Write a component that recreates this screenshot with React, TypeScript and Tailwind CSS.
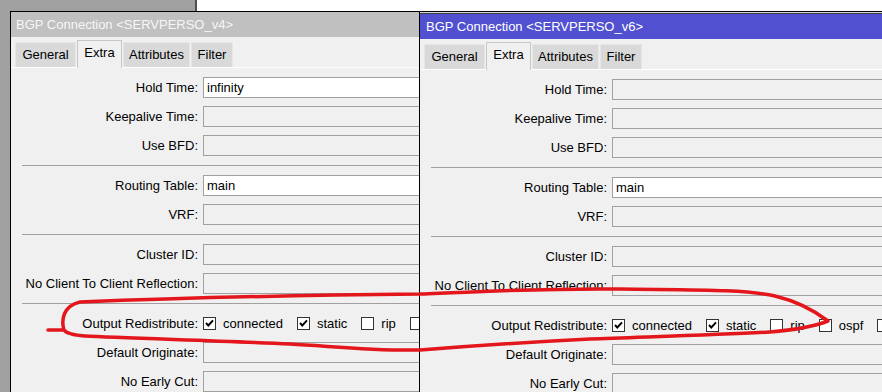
type Row =
  | { kind: "field"; label: string; value?: string }
  | { kind: "sep" }
  | { kind: "checks"; label: string };

type Box = { name?: string; checked: boolean };

const rows = (holdTime?: string): Row[] => [
  { kind: "field", label: "Hold Time", value: holdTime },
  { kind: "field", label: "Keepalive Time" },
  { kind: "field", label: "Use BFD" },
  { kind: "sep" },
  { kind: "field", label: "Routing Table", value: "main" },
  { kind: "field", label: "VRF" },
  { kind: "sep" },
  { kind: "field", label: "Cluster ID" },
  { kind: "field", label: "No Client To Client Reflection" },
  { kind: "sep" },
  { kind: "checks", label: "Output Redistribute" },
  { kind: "field", label: "Default Originate" },
  { kind: "field", label: "No Early Cut" },
];

// the window edge cuts the last box, so its name is not drawn
const redistV4: Box[] = [
  { name: "connected", checked: true },
  { name: "static", checked: true },
  { name: "rip", checked: false },
  { checked: false },
];

const redistV6: Box[] = [
  { name: "connected", checked: true },
  { name: "static", checked: true },
  { name: "rip", checked: false },
  { name: "ospf", checked: false },
  { checked: false },
];

const tabs = [
  { name: "General", w: "w-[61px]" },
  { name: "Extra", w: "w-[45px]" },
  { name: "Attributes", w: "w-[67px]" },
  { name: "Filter", w: "w-[42px]" },
];

const Check = ({ checked }: { checked: boolean }) => (
  <span className="w-[13px] h-[13px] border border-[#333] bg-white flex items-center justify-center shrink-0">
    {checked && (
      <svg width="11" height="11" viewBox="0 0 11 11">
        <path d="M2 5 L4.3 7.5 L9 2.3" stroke="#000" strokeWidth="1.9" fill="none" />
      </svg>
    )}
  </span>
);

const BgpWindow = ({
  title,
  active,
  holdTime,
  redist,
}: {
  title: string;
  active: boolean;
  holdTime?: string;
  redist: Box[];
}) => (
  <div className="w-full h-full bg-[#f0f0f0] border-l border-t border-black flex flex-col overflow-hidden">
    {/* TITLE */}
    {active ? (
      <div className="border-t border-[#d8d8d8]">
        <div className="border-t border-[#404040] h-[26px] bg-[#5050d0] text-white flex items-center pl-[6px]">
          {title}
        </div>
      </div>
    ) : (
      <div className="h-[25px] bg-[#c0c0c0] text-[#f6f6f6] flex items-center pl-[5px]">{title}</div>
    )}
    {/* TABS */}
    <div className="h-[30px] flex items-end gap-px pl-[4px]">
      {tabs.map((t) =>
        t.name === "Extra" ? (
          <div
            key={t.name}
            className={`${t.w} h-[28px] -mb-px relative z-10 bg-[#f0f0f0] border-x border-t border-[#c8c8c8] flex justify-center pt-[2px]`}
          >
            {t.name}
          </div>
        ) : (
          <div
            key={t.name}
            className={`${t.w} h-[25px] bg-[#d9d9d9] border-x border-t border-[#e6e6e6] flex items-center justify-center`}
          >
            {t.name}
          </div>
        )
      )}
    </div>
    {/* PANEL */}
    <div className="flex-1 border-t border-white pt-[9px] pl-[11px] flex flex-col gap-2">
      {rows(holdTime).map((r, i) => {
        if (r.kind === "sep") return <div key={i} className="h-px my-px bg-[#a0a0a0]" />;
        return (
          <div key={i} className="flex items-center gap-[5px] h-[21px]">
            <div className="w-[176px] shrink-0 text-right">{r.label}:</div>
            {r.kind === "checks" ? (
              <div className="flex items-center gap-[14px]">
                {redist.map((c, j) => (
                  <div key={j} className="flex items-center gap-[7px]">
                    <Check checked={c.checked} />
                    {c.name && <span>{c.name}</span>}
                  </div>
                ))}
              </div>
            ) : (
              <div
                className={`flex-1 h-[21px] border border-[#a0a0a0] pl-[3px] flex items-center ${
                  r.value ? "bg-white" : "bg-[#f0f0f0]"
                }`}
              >
                {r.value}
              </div>
            )}
          </div>
        );
      })}
    </div>
  </div>
);

const App = () => (
  <div className="relative w-[882px] h-[392px] overflow-hidden bg-[#a0a0a0] text-[13px] text-black whitespace-nowrap font-['Liberation_Sans',Arial,sans-serif]">
    {/* window behind */}
    <div className="absolute left-[195px] top-0 w-[700px] h-[12px] bg-white border-l-2 border-[#505050]" />
    <div className="absolute left-[10px] top-[11px] w-[410px] h-[400px]">
      <BgpWindow title="BGP Connection <SERVPERSO_v4>" active={false} holdTime="infinity" redist={redistV4} />
    </div>
    <div className="absolute left-[419px] top-[11px] w-[480px] h-[400px]">
      <BgpWindow title="BGP Connection <SERVPERSO_v6>" active={true} redist={redistV6} />
    </div>
    {/* red annotation */}
    <svg className="absolute inset-0 pointer-events-none" width="882" height="392" viewBox="0 0 882 392">
      <path
        d="M48 330 L64 330 C61 320 63 306 80 302 C180 298 320 295 420 294 C480 292 540 288 620 289 C690 290 745 289 775 296 C800 302 815 311 828 321 C815 326 795 330 770 332 C720 335 640 337 590 339 C530 342 470 346 420 350 C370 351 330 346 290 344 C230 341 120 338 85 336 C72 335 66 333 64 330"
        stroke="#e3161c"
        strokeWidth="3.5"
        strokeLinecap="round"
        strokeLinejoin="round"
        fill="none"
      />
    </svg>
  </div>
);

export default App;
